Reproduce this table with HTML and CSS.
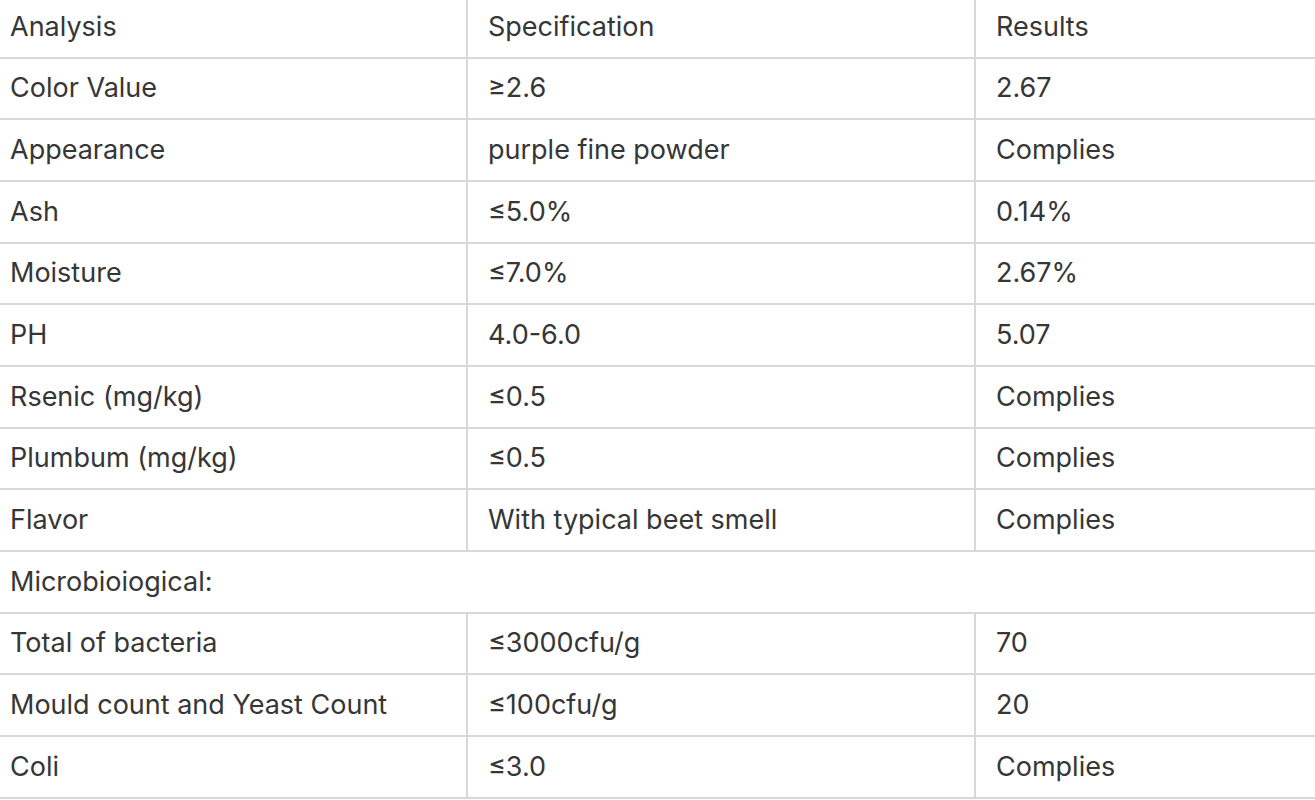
FILE: index.html
```html
<!DOCTYPE html>
<html>
<head>
<meta charset="utf-8">
<link rel="stylesheet" href="styles.css">
</head>
<body>
<table class="spec">
<colgroup><col class="c1"><col class="c2"><col class="c3"></colgroup>
<tbody>
<tr><td>Analysis</td><td>Specification</td><td>Results</td></tr>
<tr><td>Color Value</td><td>≥2.6</td><td>2.67</td></tr>
<tr><td>Appearance</td><td>purple fine powder</td><td>Complies</td></tr>
<tr><td>Ash</td><td>≤5.0%</td><td>0.14%</td></tr>
<tr><td>Moisture</td><td>≤7.0%</td><td>2.67%</td></tr>
<tr><td>PH</td><td>4.0-6.0</td><td>5.07</td></tr>
<tr><td>Rsenic (mg/kg)</td><td>≤0.5</td><td>Complies</td></tr>
<tr><td>Plumbum (mg/kg)</td><td>≤0.5</td><td>Complies</td></tr>
<tr><td>Flavor</td><td>With typical beet smell</td><td>Complies</td></tr>
<tr><td colspan="3">Microbioiogical:</td></tr>
<tr><td>Total of bacteria</td><td>≤3000cfu/g</td><td>70</td></tr>
<tr><td>Mould count and Yeast Count</td><td>≤100cfu/g</td><td>20</td></tr>
<tr><td>Coli</td><td>≤3.0</td><td>Complies</td></tr>
</tbody>
</table>
</body>
</html>
```
FILE: styles.css
```css
html, body {
  margin: 0;
  padding: 0;
  background: #ffffff;
  overflow: hidden;
}
.spec {
  border-collapse: separate;
  border-spacing: 0;
  table-layout: fixed;
  width: 1340px;
  margin: -3px 0 0 -12px;
  font-family: Inter, "Noto Sans", sans-serif;
  font-size: 27px;
  color: #363636;
}
.c1 { width: 478px; }
.c2 { width: 508px; }
.c3 { width: 354px; }
.spec td {
  box-sizing: border-box;
  height: 61.67px;
  padding: 0 20px;
  border-left: 2px solid #d8d8d8;
  border-bottom: 2px solid #d8d8d8;
  vertical-align: middle;
  white-space: nowrap;
  line-height: 32px;
}
```
